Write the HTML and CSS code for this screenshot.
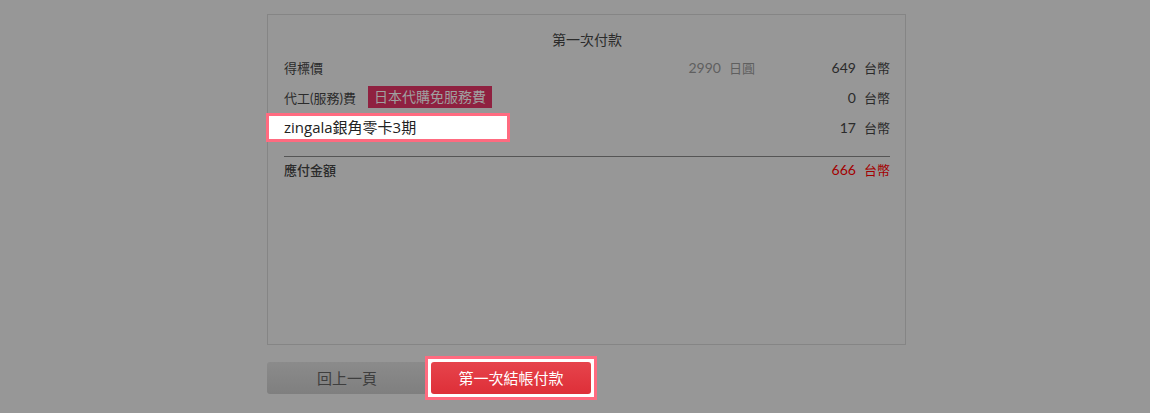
FILE: index.html
```html
<html>
<head>
<meta charset="utf-8">
<link rel="stylesheet" href="styles.css">
</head>
<body>
<div class="page">
	<div class="panel">
		<h3>第一次付款</h3>
		<div class="row">
			<div class="label">得標價</div>
			<div class="jpy">2990<span class="unit">日圓</span></div>
			<div class="twd">649<span class="unit">台幣</span></div>
		</div>
		<div class="row">
			<div class="label">代工(服務)費<span class="badge">日本代購免服務費</span></div>
			<div class="twd">0<span class="unit">台幣</span></div>
		</div>
		<div class="row">
			<div class="label"><span class="spot">zingala銀角零卡3期</span></div>
			<div class="twd">17<span class="unit">台幣</span></div>
		</div>
		<div class="row total">
			<div class="label">應付金額</div>
			<div class="twd red">666<span class="unit">台幣</span></div>
		</div>
	</div>
	<div class="buttons">
		<a href="#" class="back">回上一頁</a>
		<span class="spot_btn"><a href="#" class="pay">第一次結帳付款</a></span>
	</div>
</div>
</body>
</html>
```

FILE: styles.css
```css
body
{
margin: 0;
background-color: #979797;
font-family: Lato, "Noto Sans CJK TC", sans-serif;
color: #2b2b2b;
font-size: 13px;
}

.page
{
padding: 14px 0 0 267px;
width: 639px;
}

.panel
{
border: 1px solid #858585;
height: 329px;
padding: 0 15px 0 16px;
}

h3
{
font-size: 14px;
font-weight: normal;
text-align: center;
margin: 15px 0 2px 0;
line-height: 20px;
}

.row
{
display: flex;
align-items: center;
height: 30px;
}

.label
{
flex: 1;
display: flex;
align-items: center;
}

.jpy
{
color: #5f5f5f;
width: 120px;
text-align: right;
font-size: 14px;
}

.twd
{
width: 135px;
text-align: right;
font-size: 14px;
}

.unit
{
margin-left: 8px;
font-size: 13px;
}

.red { color: #a30000; }

.badge
{
background-color: #8f2140;
color: #a0a0a0;
font-size: 14px;
line-height: 22px;
padding: 0 6px;
margin-left: 12px;
}

.spot
{
display: block;
background-color: #fff;
outline: 3px solid #ff6b80;
margin-left: -15px;
padding-left: 15px;
width: 223px;
line-height: 23px;
color: #222;
font-family: "Open Sans", "Noto Sans CJK TC", sans-serif;
font-size: 15px;
}

.total
{
border-top: 1px solid #555;
margin-top: 14px;
height: 24px;
}

.total .label { font-weight: 500; }

.buttons
{
display: flex;
align-items: center;
margin-top: 14px;
}

a
{
display: block;
text-decoration: none;
text-align: center;
font-size: 15px;
line-height: 32px;
border-radius: 3px;
}

a.back
{
width: 160px;
color: #3e3e3e;
background: linear-gradient(#8b8b8b, #7f7f7f);
}

.spot_btn
{
margin-left: 1px;
padding: 3px;
background-color: #fff;
outline: 3px solid #ff6b80;
}

a.pay
{
width: 160px;
color: #fff;
background: linear-gradient(#e6444c, #de2f38);
}
```
